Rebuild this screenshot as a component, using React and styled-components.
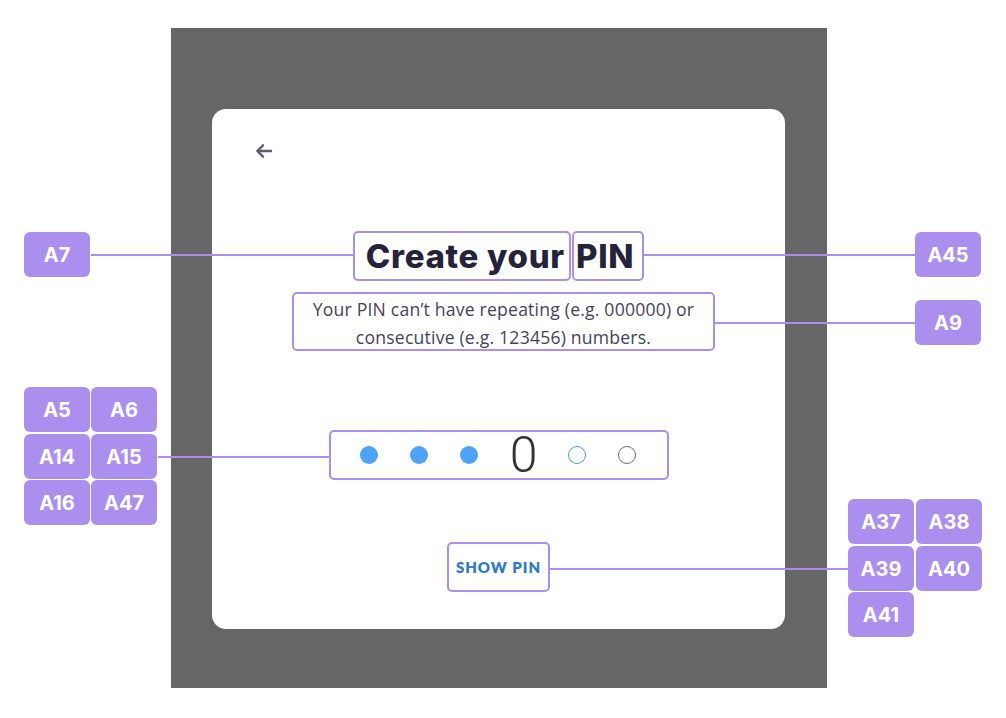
import styled, { createGlobalStyle } from "styled-components";

const GlobalStyle = createGlobalStyle`
	html, body {
		margin: 0;
		padding: 0;
		background: #ffffff;
	}
	body {
		font-family: "Lato", "Noto Sans", sans-serif;
	}
`;

const ACCENT = "#ab8fee";

// Annotation labels that sit over the screenshot
const labels = [
	{ text: "A7", x: 24, y: 232 },
	{ text: "A45", x: 915, y: 232 },
	{ text: "A9", x: 915, y: 300 },
	{ text: "A5", x: 24, y: 387 },
	{ text: "A6", x: 91, y: 387 },
	{ text: "A14", x: 24, y: 434 },
	{ text: "A15", x: 91, y: 434 },
	{ text: "A16", x: 24, y: 480 },
	{ text: "A47", x: 91, y: 480 },
	{ text: "A37", x: 848, y: 499 },
	{ text: "A38", x: 916, y: 499 },
	{ text: "A39", x: 848, y: 546 },
	{ text: "A40", x: 916, y: 546 },
	{ text: "A41", x: 848, y: 592 },
];

const leaders = [
	{ x1: 91, x2: 353, y: 254 },
	{ x1: 642, x2: 915, y: 254 },
	{ x1: 714, x2: 915, y: 322 },
	{ x1: 158, x2: 331, y: 456 },
	{ x1: 548, x2: 848, y: 568 },
];

const BackArrow = () => (
	<svg width="20" height="20" viewBox="0 0 20 20" fill="none">
		<path
			d="M17 10H3.5M9 4.3L3.3 10 9 15.7"
			stroke="#5d5a78"
			strokeWidth="2.4"
			strokeLinecap="round"
			strokeLinejoin="round"
		/>
	</svg>
);

const App = () => {
	return (
		<Page>
			<GlobalStyle />
			<Frame>
				<Card>
					<BackRow>
						<BackArrow />
					</BackRow>
					<Title>
						<Marked>Create your</Marked>
						<Marked $tight>PIN</Marked>
					</Title>
					<Subtitle>
						Your PIN can’t have repeating (e.g. 000000) or
						<br />
						consecutive (e.g. 123456) numbers.
					</Subtitle>
					<PinRow>
						<Dot $filled />
						<Dot $filled />
						<Dot $filled />
						<Digit>0</Digit>
						<Dot $color="#4a9be8" />
						<Dot $color="#6b6880" />
					</PinRow>
					<ShowPin>SHOW PIN</ShowPin>
				</Card>
			</Frame>

			{leaders.map((l, i) => (
				<Leader
					key={i}
					style={{ left: l.x1, top: l.y, width: l.x2 - l.x1 }}
				/>
			))}
			{labels.map((l) => (
				<Label key={l.text} style={{ left: l.x, top: l.y }}>
					{l.text}
				</Label>
			))}
		</Page>
	);
};

const Page = styled.div`
	position: relative;
	width: 1006px;
	height: 718px;
	overflow: hidden;
	background: #ffffff;
	padding: 28px 0 0 171px;
	box-sizing: border-box;
`;

const Frame = styled.div`
	width: 656px;
	height: 660px;
	background: #666666;
	padding: 81px 42px 59px 41px;
	box-sizing: border-box;
`;

const Card = styled.div`
	height: 100%;
	background: #ffffff;
	border-radius: 14px;
	display: flex;
	flex-direction: column;
	align-items: center;
	padding: 32px 42px 0;
	box-sizing: border-box;
`;

const BackRow = styled.div`
	align-self: stretch;
	height: 20px;
	display: flex;
	align-items: center;
`;

const Title = styled.h1`
	margin: 70px 0 0;
	display: flex;
	gap: 1px;
	font-family: "Inter", sans-serif;
	font-weight: 800;
	font-size: 33px;
	letter-spacing: 0.7px;
	color: #25233a;
`;

const Marked = styled.span`
	display: block;
	height: 50px;
	line-height: 47px;
	box-sizing: border-box;
	border: 2px solid ${ACCENT};
	border-radius: 5px;
	padding: ${(p) => (p.$tight ? "0 8px 0 2px" : "0 4px 0 11px")};
`;

const Subtitle = styled.p`
	margin: 11px 0 0 10px;
	width: 423px;
	height: 59px;
	box-sizing: border-box;
	border: 2px solid ${ACCENT};
	border-radius: 5px;
	text-align: center;
	font-family: "Open Sans", sans-serif;
	font-size: 17.6px;
	letter-spacing: 0.2px;
	line-height: 28px;
	padding-top: 1px;
	color: #45435a;
	white-space: nowrap;
`;

const PinRow = styled.div`
	margin-top: 79px;
	width: 340px;
	height: 50px;
	box-sizing: border-box;
	border: 2px solid ${ACCENT};
	border-radius: 5px;
	display: flex;
	align-items: center;
	padding-left: 29px;
	gap: 32px;
`;

const Dot = styled.span`
	width: 18px;
	height: 18px;
	box-sizing: border-box;
	border-radius: 50%;
	background: ${(p) => (p.$filled ? "#4da3f7" : "transparent")};
	border: ${(p) => (p.$filled ? "none" : `1.3px solid ${p.$color}`)};
	flex: none;
`;

const Digit = styled.span`
	width: 28px;
	margin: 0 -2px 0 0;
	font-family: "Roboto", sans-serif;
	font-weight: 300;
	font-size: 50px;
	line-height: 46px;
	color: #333333;
	text-align: center;
`;

const ShowPin = styled.button`
	margin-top: 62px;
	width: 103px;
	height: 50px;
	box-sizing: border-box;
	border: 2px solid ${ACCENT};
	border-radius: 5px;
	background: #ffffff;
	font-family: "Lato", sans-serif;
	font-weight: 800;
	font-size: 15px;
	letter-spacing: 1px;
	color: #2f7ac8;
	padding: 0;
`;

const Leader = styled.div`
	position: absolute;
	height: 2px;
	background: ${ACCENT};
`;

const Label = styled.div`
	position: absolute;
	width: 66px;
	height: 45px;
	border-radius: 6px;
	background: ${ACCENT};
	color: #ffffff;
	font-family: "Inter", sans-serif;
	font-weight: 700;
	font-size: 20px;
	display: flex;
	align-items: center;
	justify-content: center;
`;

export default App;
